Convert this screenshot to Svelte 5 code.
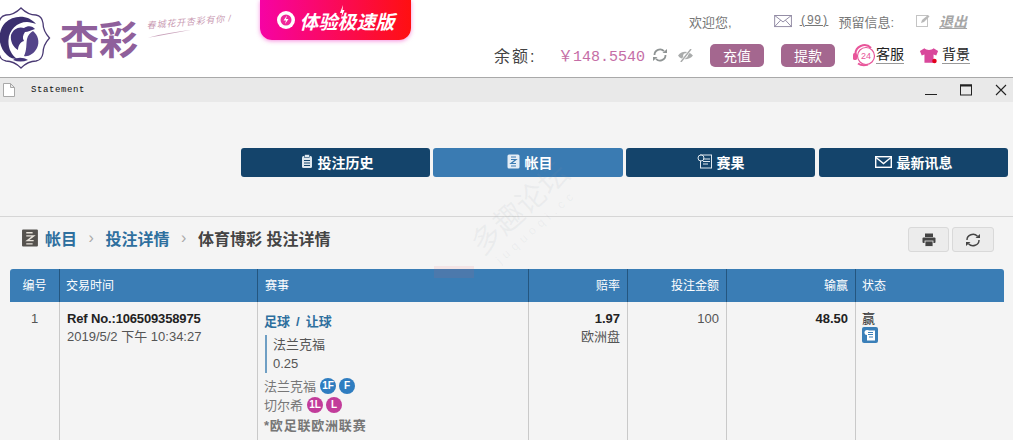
<script lang="ts">
  const columns = [
    { label: "编号", cls: "c-no" },
    { label: "交易时间", cls: "c-time" },
    { label: "赛事", cls: "c-event" },
    { label: "赔率", cls: "c-odds num" },
    { label: "投注金额", cls: "c-stake num" },
    { label: "输赢", cls: "c-win num" },
    { label: "状态", cls: "c-state" },
  ];
</script>

<div class="page">
  <header class="top">
    <div class="brand">
      <svg class="emblem" viewBox="0 0 52 70" width="52" height="70">
        <path d="M21 4Q28 11 36 11Q42 12 43 19Q43 27 49.500 34Q43 41 43 49Q42 56 36 57Q28 57 21 64Q14 57 6 57Q0 56 -1 49Q-1 41 -7 34Q-1 27 -1 19Q0 12 6 11Q14 11 21 4Z" fill="#fff" stroke="#4a3a74" stroke-width="1.300" />
        <path d="M36 20C29 11 14 10 5 19C-3 28 -2 43 7 51C10 54 14 55 17 55C11 50 8 44 8.500 36C9 26 17 18 27 18C30 18 33 19 36 20Z" fill="#3b2f6e" />
        <path d="M11 31C13 25 19 22 24 24C28 21 33 22 35 25C31 26 28 28 25 28C23 31 22 34 24 37C20 38 18 42 18 46C13 43 10 37 11 31Z" fill="#43357a" />
        <path d="M33 27C38 31 40 38 37 44C34 50 28 53 24 52C27 46 26 40 27 35C28 31 30 29 33 27Z" fill="#54448a" />
        <path d="M13 56C17 53 23 53 28 56C23 58 18 58 13 56Z" fill="#43357a" />
      </svg>
      <span class="brand-name">杏彩</span>
      <div class="slogan-wrap">
        <span class="slogan">春城花开杏彩有你 /</span>
        <svg class="swoosh" viewBox="0 0 44 6" width="44" height="6"><path d="M0 5C14 4 28 3 44 1C30 1.500 14 2.500 0 5Z" fill="#c9a3bb" /></svg>
      </div>
    </div>

    <div class="promo">
      <svg viewBox="0 0 20 20" width="20" height="20">
        <circle cx="10" cy="10" r="9" fill="#fff" />
        <circle cx="10" cy="10" r="5.500" fill="#f0279a" />
        <path d="M11 5.500L7.500 10.500H10L9 14L12.500 9H10Z" fill="#fff" />
      </svg>
      <span>体验极速版</span>
      <svg class="spark" viewBox="0 0 6 12" width="6" height="12"><path d="M4 0L1 8H3L2.500 12L5.500 5H3.500Z" fill="#fff" /></svg>
    </div>

    <div class="account">
      <div class="line-a">
        <span class="welcome">欢迎您,</span>
        <svg class="mail" viewBox="0 0 20 14" width="19" height="13"><rect x="0.500" y="0.500" width="18" height="12" fill="none" stroke="#8d86a0" /><path d="M0.500 0.500L9.500 7.500L18.500 0.500M0.500 12.500L7 5.500M18.500 12.500L12 5.500" fill="none" stroke="#8d86a0" /></svg>
        <span class="count">(99)</span>
        <span class="reserved">预留信息:</span>
        <svg class="edit" viewBox="0 0 14 14" width="14" height="14"><rect x="0.500" y="1.500" width="11" height="11" fill="none" stroke="#c4c4c4" /><path d="M5 9L6 6L12 1L13.500 2.500L8 8Z" fill="#b9b9b9" /></svg>
        <span class="logout">退出</span>
      </div>
      <div class="line-b">
        <span class="balance-label">余额:</span>
        <span class="amount">￥148.5540</span>
        <svg class="refresh" viewBox="0 0 16 16" width="16" height="16"><path d="M2.500 8A5.500 5.500 0 0 1 12 4.200M13.500 8A5.500 5.500 0 0 1 4 11.800" fill="none" stroke="#8f9494" stroke-width="1.800" /><path d="M10.500 6H15V2ZM5.500 10H1V14Z" fill="#8f9494" /></svg>
        <svg class="eye" viewBox="0 0 18 14" width="17" height="13"><path d="M1 7C4 1.500 13 1.500 17 7C13 12.500 4 12.500 1 7Z" fill="#a9abab" /><circle cx="9" cy="7" r="2.500" fill="#fff" /><path d="M4 14L15 0" stroke="#fff" stroke-width="3" /><path d="M4 14L15 0" stroke="#a9abab" stroke-width="1.600" /></svg>
        <button class="pill first">充值</button>
        <button class="pill second">提款</button>
        <svg class="headset" viewBox="0 0 24 24" width="24" height="24">
          <path d="M3.500 12A9 9 0 0 1 19 5" fill="none" stroke="#e8559a" stroke-width="2" />
          <path d="M6 20.500C9 22.500 13 22.500 16 21.500" fill="none" stroke="#e8559a" stroke-width="2" />
          <rect x="1" y="10" width="4" height="7" rx="1.500" fill="#e8559a" />
          <circle cx="14" cy="13" r="8.500" fill="#fff" stroke="#e8559a" stroke-width="1.200" />
          <text x="14" y="16" class="h24">24</text>
        </svg>
        <span class="link svc">客服</span>
        <svg class="shirt" viewBox="0 0 22 18" width="20" height="17">
          <path d="M6 1L1 4L3 9L6 8V17H16V8L19 9L21 4L16 1C14 3.500 8 3.500 6 1Z" fill="#d9479b" />
          <circle cx="17" cy="15" r="2.500" fill="#e3001b" />
        </svg>
        <span class="link bg">背景</span>
      </div>
    </div>
  </header>

  <div class="titlebar">
    <div class="doc-title">
      <svg viewBox="0 0 12 14" width="12" height="14"><path d="M0.500 0.500H7.500L11.500 4.500V13.500H0.500Z M7.500 0.500V4.500H11.500" fill="#fff" stroke="#a8a8a8" /></svg>
      <span>Statement</span>
    </div>
    <div class="win-controls">
      <svg viewBox="0 0 12 12" width="12" height="12"><path d="M0 10.500H12" stroke="#222" /></svg>
      <svg viewBox="0 0 12 12" width="12" height="12"><rect x="0.500" y="1" width="11" height="10" fill="none" stroke="#222" /><path d="M0 1.500H12" stroke="#222" stroke-width="2" /></svg>
      <svg viewBox="0 0 12 12" width="12" height="12"><path d="M1 1L11 11M11 1L1 11" stroke="#222" stroke-width="1.100" /></svg>
    </div>
  </div>

  <nav class="tabs">
    <a class="tab">
      <svg viewBox="0 0 12 15" width="12" height="15"><rect x="1" y="2" width="10" height="12" rx="1.500" fill="#dfe8ef" /><rect x="3.500" y="0.500" width="5" height="3" fill="#dfe8ef" stroke="#14446b" stroke-width="0.600" /><path d="M3 6.500H9M3 9H9M3 11.500H9" stroke="#14446b" /></svg>
      投注历史
    </a>
    <a class="tab active">
      <svg viewBox="0 0 13 15" width="13" height="15"><rect x="0.500" y="0.500" width="12" height="14" rx="1.500" fill="#e4edf5" /><path d="M4 3H9M4 5.500H9L4 9.500H9M4 12H9" stroke="#3a7bb2" stroke-width="1.200" fill="none" /></svg>
      帐目
    </a>
    <a class="tab">
      <svg viewBox="0 0 15 15" width="15" height="15"><rect x="3.500" y="1" width="11" height="13" fill="#14446b" stroke="#dfe8ef" /><circle cx="4" cy="4" r="3" fill="#14446b" stroke="#dfe8ef" /><path d="M6 5H13M6 7.500H13M6 10H11" stroke="#dfe8ef" /></svg>
      赛果
    </a>
    <a class="tab">
      <svg viewBox="0 0 17 12" width="17" height="12"><rect x="0.700" y="0.700" width="15.600" height="10.600" fill="none" stroke="#fff" stroke-width="1.400" /><path d="M1 1.500L8.500 7.500L16 1.500" fill="none" stroke="#fff" stroke-width="1.400" /></svg>
      最新讯息
    </a>
  </nav>

  <div class="crumbs-row">
    <div class="crumbs">
      <svg viewBox="0 0 16 17" width="17" height="18"><rect width="15" height="16" y="0.500" rx="1" fill="#55524e" /><path d="M4 3.500H10M4 6.500H11L5 11H11M4 14H10" stroke="#e9e4dc" stroke-width="1.300" fill="none" /></svg>
      <span class="crumb-link first">帐目</span>
      <span class="sep">›</span>
      <span class="crumb-link">投注详情</span>
      <span class="sep">›</span>
      <span class="crumb-now">体育博彩 投注详情</span>
    </div>
    <div class="actions">
      <button class="tool" aria-label="打印">
        <svg viewBox="0 0 14 14" width="14" height="14"><rect x="3" y="0.500" width="8" height="3.500" fill="#444" /><rect x="0.500" y="4.500" width="13" height="5.500" rx="1" fill="#444" /><rect x="3" y="8" width="8" height="5.500" fill="#444" stroke="#f0f0f0" stroke-width="0.800" /></svg>
      </button>
      <button class="tool" aria-label="刷新">
        <svg viewBox="0 0 16 14" width="16" height="14"><path d="M2 7A6 5.500 0 0 1 12.500 3.200M14 7A6 5.500 0 0 1 3.500 10.800" fill="none" stroke="#444" stroke-width="1.400" /><path d="M10.500 5H15V1ZM5.500 9H1V13Z" fill="#444" /></svg>
      </button>
    </div>
  </div>

  <section class="table">
    <div class="row head">
      {#each columns as col}
        <div class="cell {col.cls}">{col.label}</div>
      {/each}
    </div>
    <div class="row body">
      <div class="cell c-no">1</div>
      <div class="cell c-time">
        <div class="ref">Ref No.:106509358975</div>
        <div class="date">2019/5/2 下午 10:34:27</div>
      </div>
      <div class="cell c-event">
        <div class="sport">足球 / 让球</div>
        <div class="pick">
          <div>法兰克福</div>
          <div>0.25</div>
        </div>
        <div class="team">法兰克福<i class="ball blue">1F</i><i class="ball blue">F</i></div>
        <div class="team">切尔希<i class="ball pink">1L</i><i class="ball pink">L</i></div>
        <div class="league">*欧足联欧洲联赛</div>
      </div>
      <div class="cell c-odds num">
        <b>1.97</b>
        <div class="odds-type">欧洲盘</div>
      </div>
      <div class="cell c-stake num">100</div>
      <div class="cell c-win num"><b>48.50</b></div>
      <div class="cell c-state">
        <div class="state-text">赢</div>
        <svg viewBox="0 0 16 16" width="16" height="16"><rect width="16" height="16" rx="2" fill="#3a7fb8" /><rect x="5" y="3.500" width="8" height="10" fill="#fff" /><circle cx="5" cy="5.500" r="2.500" fill="#fff" /><path d="M6 5.500H11M6 7.500H11M7 10H11" stroke="#3a7fb8" /></svg>
      </div>
    </div>
  </section>

  <div class="watermark">
    <span class="wm-title">多趣论坛</span>
    <span class="wm-url">juquoqi.cc</span>
  </div>
  <div class="smudge"></div>
</div>

<style>
  :global(body) {
    margin: 0;
    background: #f4f4f4;
  }

  .page {
    position: relative;
    width: 1013px;
    height: 440px;
    overflow: hidden;
    font-family: "Liberation Sans", "Noto Sans CJK SC", sans-serif;
    font-size: 13px;
    color: #333;
    background: #f4f4f4;
  }

  .top {
    height: 77px;
    background: #fff;
    border-bottom: 1px solid #a9a9a9;
    display: flex;
  }

  .brand {
    width: 260px;
    display: flex;
    align-items: flex-start;
    flex-shrink: 0;
  }

  .emblem {
    margin-top: 4px;
    flex-shrink: 0;
  }

  .brand-name {
    margin: 17px 0 0 8px;
    font-size: 39px;
    line-height: 48px;
    font-weight: 700;
    color: #8f609b;
  }

  .slogan-wrap {
    margin: 16px 0 0 9px;
    display: flex;
    flex-direction: column;
    transform: rotate(-5deg);
  }

  .slogan {
    font-size: 9px;
    line-height: 12px;
    font-style: italic;
    color: #c99ab2;
    white-space: nowrap;
    letter-spacing: 0.800px;
  }

  .swoosh {
    margin-top: 1px;
  }

  .promo {
    position: relative;
    width: 151px;
    height: 40px;
    flex-shrink: 0;
    border-radius: 0 0 12px 12px;
    background: linear-gradient(90deg, #f603a4, #ff1011);
    box-shadow: 0 1px 4px rgba(240, 30, 190, 0.5);
    color: #fff;
    display: flex;
    align-items: center;
    justify-content: center;
    gap: 3px;
    font-size: 19px;
    font-weight: 700;
    font-style: italic;
  }

  .spark {
    position: absolute;
    left: 79px;
    top: 5px;
  }

  .account {
    flex: 1;
    min-width: 0;
    padding-top: 12px;
  }

  .line-a {
    height: 18px;
    display: flex;
    align-items: center;
    font-size: 13px;
    color: #777;
    padding-left: 278px;
    white-space: nowrap;
  }

  .mail {
    margin-left: 42px;
  }

  .count {
    margin-left: 7px;
    font-size: 12px;
    text-decoration: underline;
    font-family: "Liberation Mono", monospace;
  }

  .reserved {
    margin-left: 10px;
  }

  .edit {
    margin-left: 22px;
  }

  .logout {
    margin-left: 9px;
    font-size: 14px;
    color: #a6a6a6;
    font-weight: 700;
    font-style: italic;
    text-decoration: underline;
  }

  .line-b {
    margin-top: 13px;
    height: 24px;
    display: flex;
    align-items: center;
    padding-left: 83px;
    white-space: nowrap;
  }

  .balance-label {
    font-size: 16px;
    color: #444;
    width: 64px;
    letter-spacing: 2px;
  }

  .amount {
    width: 88px;
    font-family: "Liberation Mono", "Noto Sans CJK SC", monospace;
    font-size: 15px;
    color: #c56da6;
  }

  .refresh {
    margin-left: 6px;
  }

  .eye {
    margin-left: 9px;
  }

  .pill {
    width: 54px;
    height: 23px;
    padding: 0;
    border: 0;
    border-radius: 5px;
    background: #a4678f;
    color: #fff;
    font: inherit;
    font-size: 14px;
  }

  .pill.first {
    margin-left: 16px;
  }

  .pill.second {
    margin-left: 17px;
  }

  .headset {
    margin-left: 17px;
  }

  .h24 {
    font-size: 9px;
    fill: #e8559a;
    text-anchor: middle;
  }

  .link {
    font-size: 14px;
    color: #222;
    border-bottom: 1px solid #999;
    line-height: 17px;
  }

  .svc {
    margin-right: 15px;
  }

  .bg {
    margin-left: 3px;
  }

  .titlebar {
    height: 24px;
    background: #e9e9e9;
    display: flex;
    justify-content: space-between;
    align-items: center;
  }

  .doc-title {
    display: flex;
    align-items: center;
    gap: 16px;
    padding-left: 3px;
    font-family: "Liberation Mono", monospace;
    font-size: 9px;
    letter-spacing: 0.600px;
    color: #111;
  }

  .win-controls {
    display: flex;
    gap: 23px;
    padding-right: 6px;
  }

  .tabs {
    margin-top: 46px;
    height: 68px;
    padding-left: 241px;
    display: grid;
    grid-template-columns: 189px 190px 190px 189px;
    column-gap: 3px;
    grid-template-rows: 29px;
    border-bottom: 1px solid #d6d6d6;
  }

  .tab {
    height: 29px;
    box-sizing: border-box;
    padding-bottom: 2px;
    border-radius: 3px;
    background: #14446b;
    color: #fff;
    font-size: 14px;
    font-weight: 700;
    display: flex;
    align-items: center;
    justify-content: center;
    gap: 5px;
  }

  .tab:nth-child(-n + 2) {
    padding-left: 3px;
  }

  .tab:nth-child(3) {
    margin-right: 1px;
  }

  .tab.active {
    background: #3a7bb2;
  }

  .crumbs-row {
    height: 52px;
    padding: 10px 19px 0 22px;
    box-sizing: border-box;
    display: flex;
    justify-content: space-between;
    align-items: flex-start;
  }

  .crumbs {
    display: flex;
    align-items: center;
    height: 24px;
    margin-top: -1px;
    font-size: 16px;
    font-weight: 700;
    white-space: nowrap;
  }

  .crumb-link {
    color: #2e6f9e;
  }

  .crumb-link.first {
    margin-left: 6px;
  }

  .sep {
    width: 28.500px;
    text-align: center;
    color: #aaa;
    font-weight: 400;
  }

  .crumb-now {
    color: #444;
  }

  .actions {
    display: flex;
    gap: 3px;
  }

  .tool {
    width: 41px;
    height: 25px;
    padding: 0;
    border: 1px solid #d9d9d9;
    border-radius: 3px;
    background: #ececec;
    display: flex;
    align-items: center;
    justify-content: center;
  }

  .tool + .tool {
    width: 42px;
  }

  .table {
    margin: 0 9px 0 10px;
  }

  .row {
    display: grid;
    grid-template-columns: 50px 198px 271px 99px 99px 129px 148px;
  }

  .head {
    height: 33px;
    background: #3a7db5;
    border-radius: 3px 3px 0 0;
    color: #fff;
    font-size: 12px;
  }

  .head .cell {
    line-height: 35px;
    padding-top: 0;
    border-right-color: #24567f;
  }

  .head .c-time {
    padding-left: 6px;
  }

  .body {
    height: 140px;
    font-size: 13px;
    color: #555;
  }

  .body .c-event {
    padding-left: 6px;
  }

  .cell {
    padding: 9px 7px 0;
    box-sizing: border-box;
    border-right: 1px solid #c9c9c9;
    white-space: nowrap;
  }

  .cell:last-child {
    border-right: 0;
  }

  .c-no {
    text-align: center;
  }

  .num {
    text-align: right;
  }

  .cell.c-state {
    padding-left: 6px;
  }

  .ref {
    font-weight: 700;
    color: #222;
    line-height: 15px;
    letter-spacing: -0.150px;
  }

  .date {
    margin-top: 3px;
    line-height: 15px;
  }

  .sport {
    color: #2e6f9e;
    font-weight: 700;
    line-height: 16px;
    padding-top: 3px;
    word-spacing: 2.500px;
  }

  .pick {
    margin: 5px 0 3px 1px;
    padding-left: 6px;
    border-left: 2px solid #6f9fc4;
    line-height: 19px;
  }

  .team {
    display: flex;
    align-items: center;
    height: 19px;
    color: #777;
  }

  .ball {
    width: 16px;
    height: 16px;
    margin-left: 3px;
    border-radius: 50%;
    color: #fff;
    font-style: normal;
    font-weight: 700;
    font-size: 10px;
    line-height: 16px;
    text-align: center;
  }

  .ball:first-of-type {
    margin-left: 4px;
  }

  .blue {
    background: #2f7dc0;
  }

  .pink {
    background: #c23c9a;
  }

  .league {
    margin-top: 3px;
    font-weight: 700;
    color: #777;
    line-height: 18px;
    letter-spacing: 0.800px;
  }

  .odds-type {
    margin-top: 3px;
    line-height: 15px;
  }

  .c-odds b,
  .c-win b {
    color: #222;
    line-height: 15px;
  }

  .state-text {
    line-height: 16px;
    color: #333;
  }

  .watermark {
    position: absolute;
    left: 440px;
    top: 190px;
    width: 170px;
    display: flex;
    flex-direction: column;
    align-items: center;
    transform: rotate(-42deg);
    pointer-events: none;
    color: rgba(140, 150, 165, 0.09);
  }

  .wm-title {
    font-size: 30px;
    line-height: 34px;
  }

  .wm-url {
    font-size: 12px;
    letter-spacing: 5px;
  }

  .smudge {
    position: absolute;
    left: 434px;
    top: 266px;
    width: 40px;
    height: 12px;
    background: rgba(240, 90, 100, 0.1);
    pointer-events: none;
  }
</style>
